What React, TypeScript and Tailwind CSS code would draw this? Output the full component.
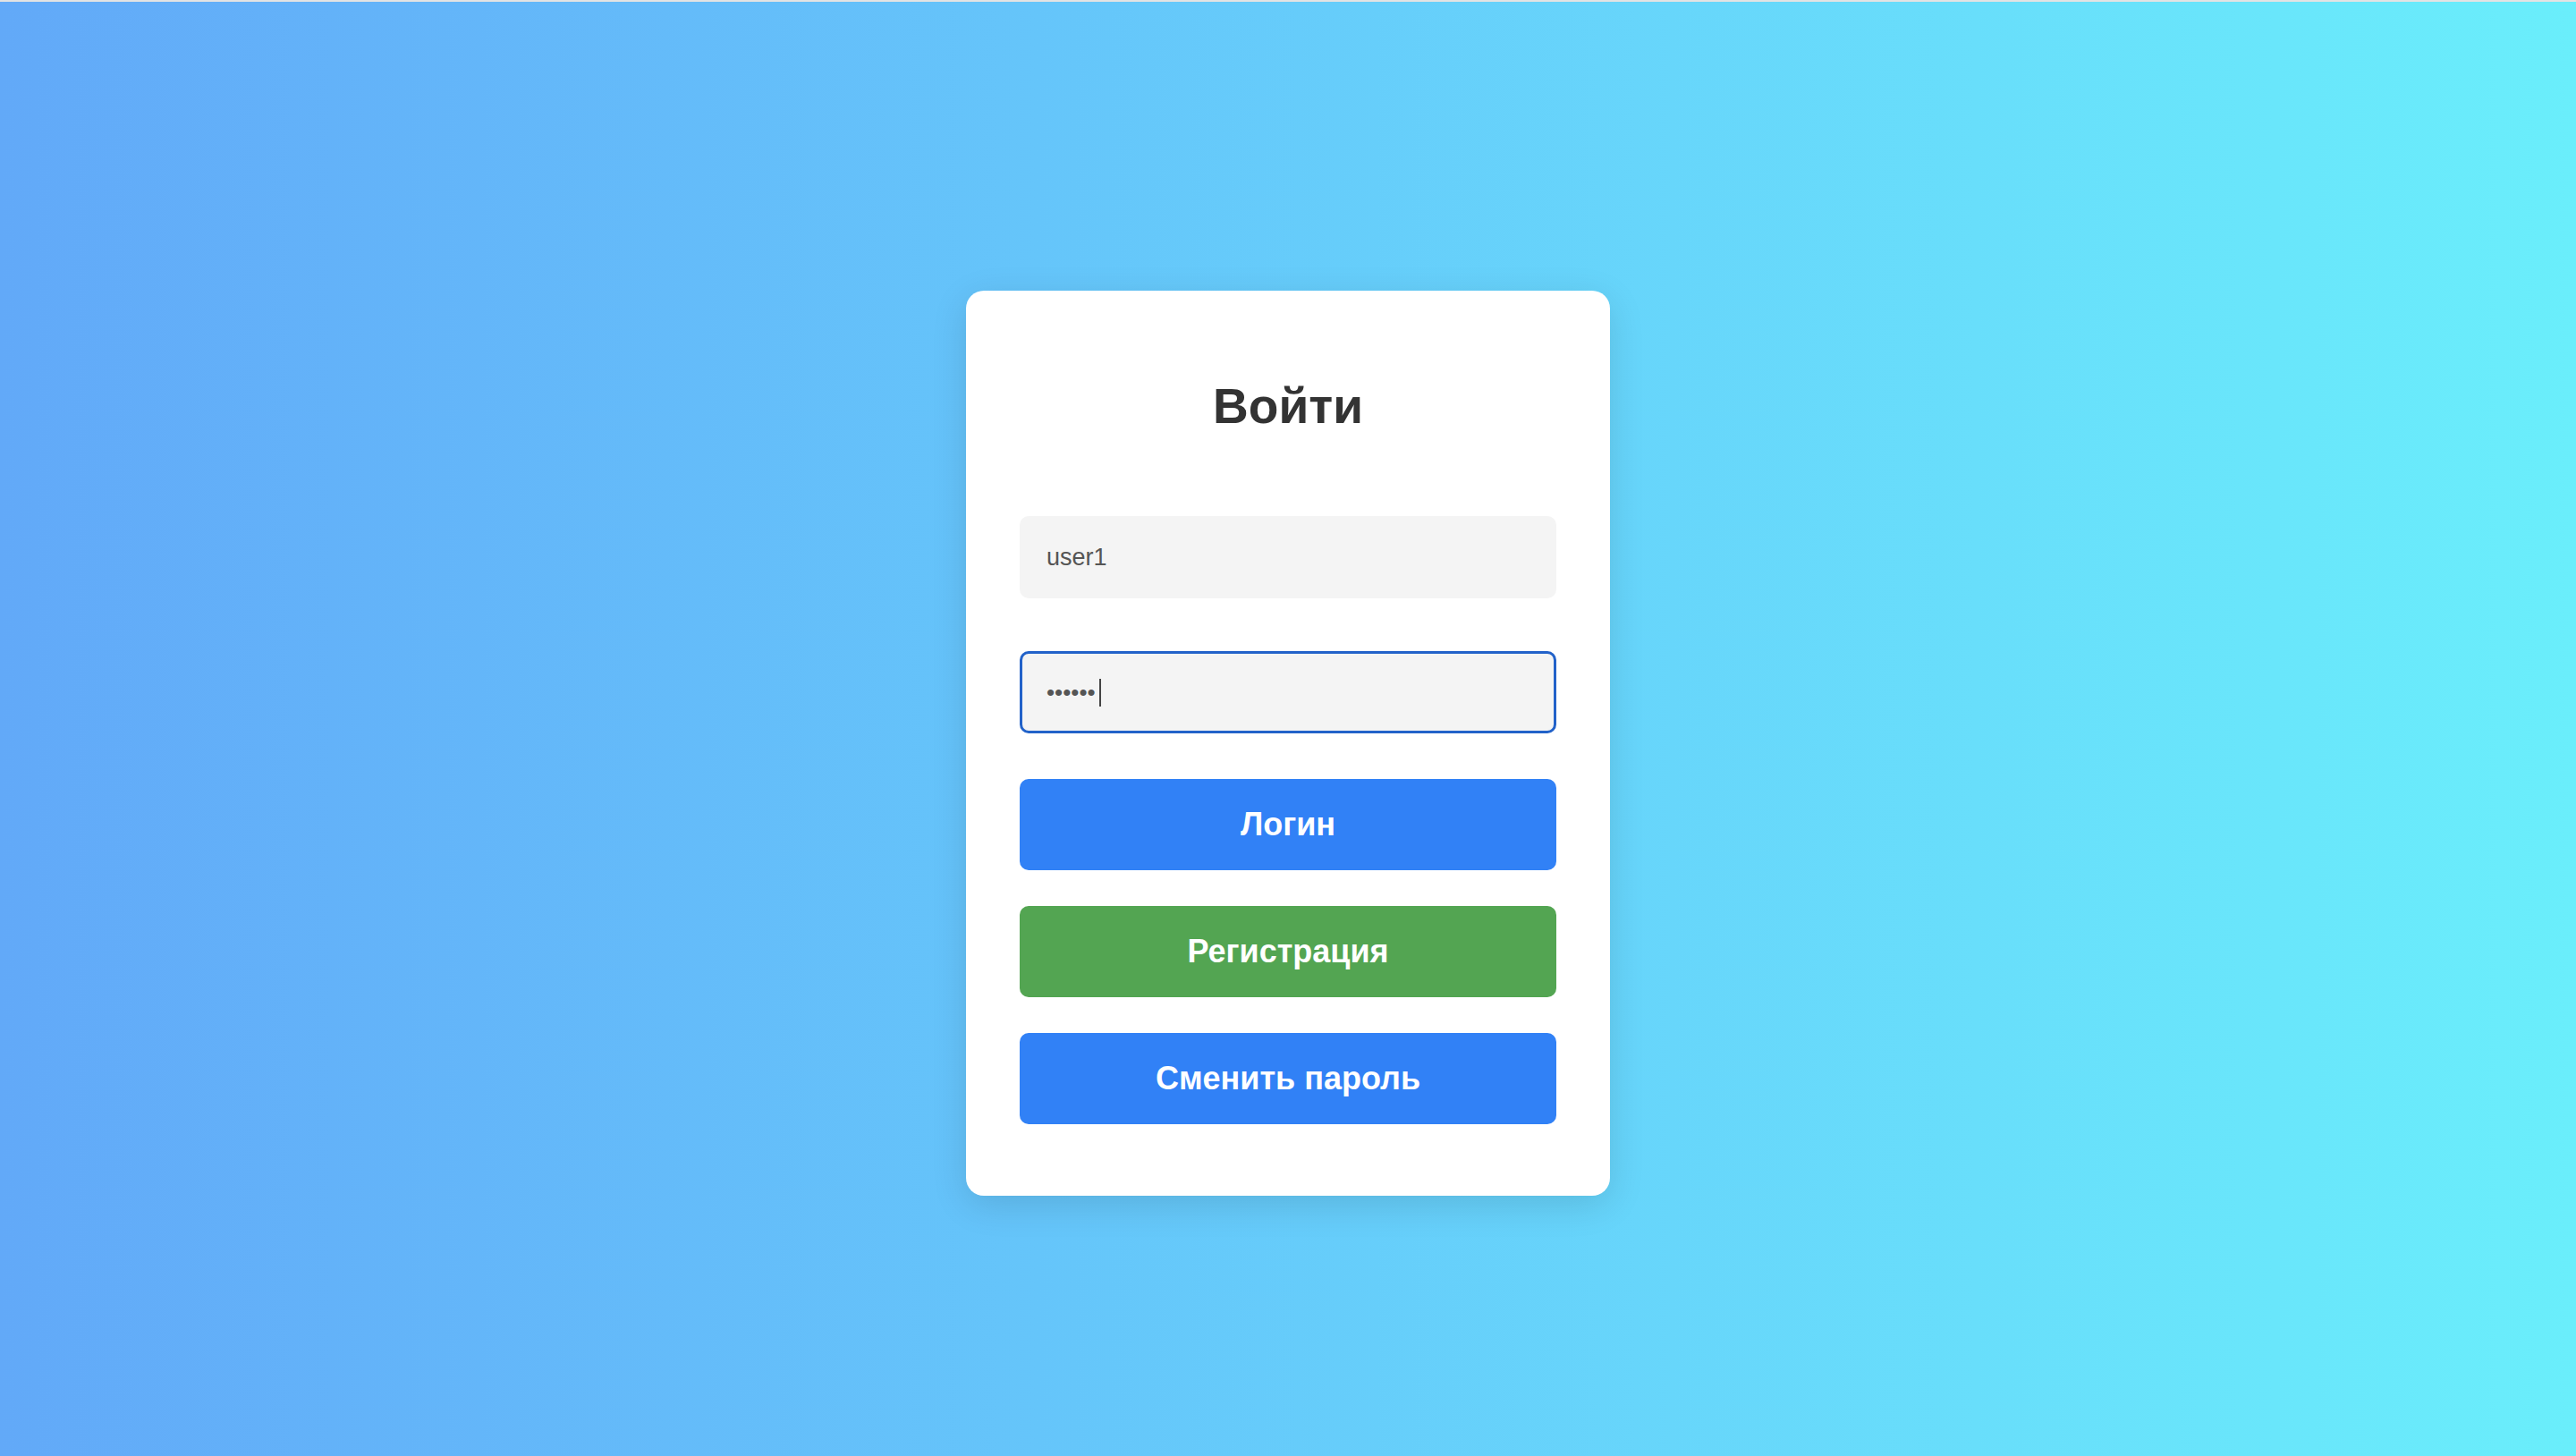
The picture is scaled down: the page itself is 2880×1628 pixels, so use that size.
export default function App() {
  const buttons = [
    { label: 'Логин', className: 'mt-[51px] bg-[#3181f6]' },
    { label: 'Регистрация', className: 'mt-[40px] bg-[#53a552]' },
    { label: 'Сменить пароль', className: 'mt-[40px] bg-[#3181f6]' },
  ];

  return (
    <div className="flex min-h-screen flex-col font-['Liberation_Sans',Arial,sans-serif]">
      <div className="h-[2px] bg-[#e3e3e3]" />
      <main className="flex flex-1 items-center justify-center bg-gradient-to-r from-[#62a9f8] to-[#6aeefb] pt-8">
        <div className="w-[720px] rounded-[20px] bg-white px-[60px] pt-[97px] pb-[80px] shadow-[0_10px_40px_rgba(0,0,0,0.12)]">
          <h2 className="text-center text-[55px] leading-[64px] font-bold text-[#333333]">Войти</h2>

          <input
            type="text"
            defaultValue="user1"
            className="mt-[91px] block h-[92px] w-full rounded-[10px] border-[3px] border-transparent bg-[#f4f4f4] px-[27px] text-[27px] text-[#555555] outline-none"
          />

          <div className="relative mt-[59px] h-[92px]">
            <input
              type="password"
              defaultValue="123456"
              className="block h-full w-full rounded-[10px] border-[3px] border-[#2262c9] bg-[#f4f4f4] px-[27px] text-[26px] text-[#555555] outline-none"
            />
            <span className="absolute top-[31px] left-[89px] h-[31px] w-[2px] bg-[#444444]" />
          </div>

          {buttons.map((b) => (
            <button
              key={b.label}
              className={`block h-[102px] w-full rounded-[10px] text-[36px] font-bold text-white ${b.className}`}
            >
              {b.label}
            </button>
          ))}
        </div>
      </main>
    </div>
  );
}
